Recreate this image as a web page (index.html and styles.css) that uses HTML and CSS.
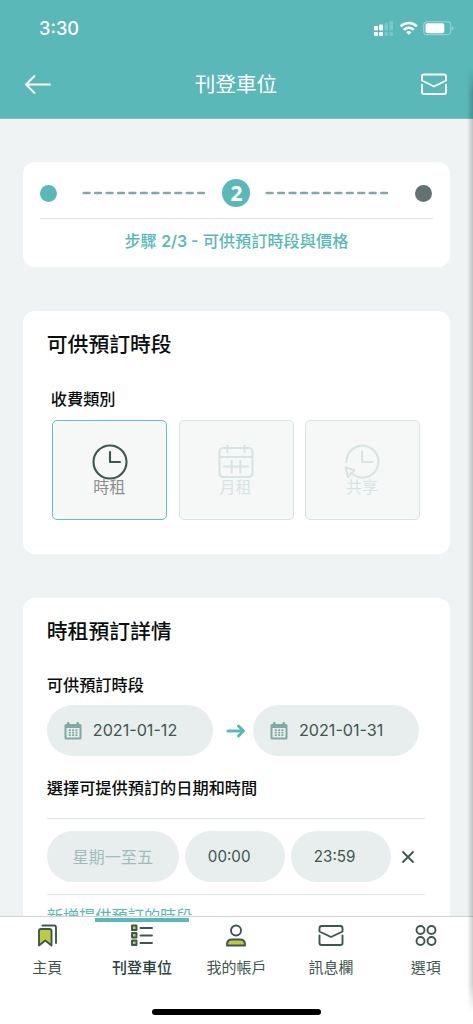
FILE: index.html
```html
<!DOCTYPE html>
<html lang="zh-Hant">
<head>
<meta charset="utf-8">
<meta name="viewport" content="width=device-width, initial-scale=1">
<title>刊登車位</title>
<link rel="stylesheet" href="styles.css">
</head>
<body>
<div class="screen">
  <header class="header">
    <div class="status">
      <span class="time">3:30</span>
      <svg class="status-icons" width="84" height="18" viewBox="0 0 84 18" fill="#fff">
        <rect x="1" y="6" width="4" height="4.500" rx="1"/><rect x="6" y="4.500" width="4" height="6" rx="1"/>
        <rect x="1" y="12" width="4" height="4" rx="1"/><rect x="6" y="12" width="4" height="4" rx="1"/>
        <g opacity=".2"><rect x="11.500" y="3" width="3.500" height="7.500" rx="1"/><rect x="16.500" y="1" width="3.500" height="9.500" rx="1"/><rect x="11.500" y="12" width="3.500" height="4" rx="1"/><rect x="16.500" y="12" width="3.500" height="4" rx="1"/></g>
        <g fill="none" stroke="#fff" stroke-width="2.500"><path d="M27.700 6.300a11.500 11.500 0 0 1 16.200 0"/><path d="M30.800 9.800a7.200 7.200 0 0 1 10 0"/></g>
        <path d="M33.200 12.300a3.800 3.800 0 0 1 5.200 0L35.800 15z"/>
        <rect x="50.700" y="1.700" width="27" height="13" rx="3.500" fill="none" stroke="#fff" stroke-opacity=".35" stroke-width="1.200"/>
        <rect x="52.500" y="3.200" width="18.800" height="10" rx="2"/>
        <path d="M79.300 6.200q2.600 2 0 4z" opacity=".5"/>
      </svg>
    </div>
    <div class="titlebar">
      <svg width="28" height="24" viewBox="0 0 28 24" fill="none" stroke="#fff" stroke-width="1.800" stroke-linecap="round" stroke-linejoin="round"><path d="M26 12.500H2M10.500 4L2 12.500l8.500 8.500"/></svg>
      <h1 class="page-title">刊登車位</h1>
      <svg width="28" height="24" viewBox="0 0 28 24" fill="none" stroke="#fff" stroke-width="1.900" stroke-linecap="round" stroke-linejoin="round"><path d="M2 12.800V20q0 2 2 2h20q2 0 2-2v-7.200M2 8.500v-4q0-2 2-2h20q2 0 2 2v4l-12 6z"/></svg>
    </div>
  </header>

  <main class="content">
    <section class="card steps">
      <div class="track">
        <span class="dot"></span>
        <svg width="124" height="4" viewBox="0 0 124 4"><path class="dash" d="M1.800 2H123"/></svg>
        <span class="current">2</span>
        <svg width="124" height="4" viewBox="0 0 124 4"><path class="dash" d="M1.800 2H123"/></svg>
        <span class="dot dot-next"></span>
      </div>
      <p class="step-text">步驟 <b>2/3 -</b> 可供預訂時段與價格</p>
    </section>

    <section class="card types">
      <h2 class="card-title">可供預訂時段</h2>
      <h3 class="label type-label">收費類別</h3>
      <div class="options">
        <div class="option selected">
          <svg width="36" height="36" viewBox="0 0 36 36" class="option-icon"><circle cx="18" cy="18" r="16.500"/><path d="M18 8v10h10"/></svg>
          <span>時租</span>
        </div>
        <div class="option">
          <svg width="36" height="36" viewBox="0 0 36 36" class="option-icon"><rect x="1.500" y="4" width="33" height="29" rx="3.500"/><path d="M1.500 13h33M9.500 1.500v6.500M26.500 1.500v6.500M6 22.500h24M13.700 17v11.500M22.300 17v11.500"/></svg>
          <span>月租</span>
        </div>
        <div class="option">
          <svg width="36" height="36" viewBox="0 0 36 36" class="option-icon"><path d="M2.500 18A16 16 0 1 1 9 30.500M18 7.500v10.500h10.500M1.500 23.500l9 2.500-6.500 7z"/></svg>
          <span>共享</span>
        </div>
      </div>
    </section>

    <section class="card details">
      <h2 class="card-title">時租預訂詳情</h2>
      <h3 class="label">可供預訂時段</h3>
      <div class="dates">
        <div class="pill date">
          <svg width="18" height="18" viewBox="0 0 18 18"><path fill="#82a7a5" fill-rule="evenodd" d="M2 2h1V1q0-1 1.300-1t1.300 1v1h6.800V1q0-1 1.300-1T15 1v1h1q1.500 0 1.500 1.500v12.500q0 1.500-1.500 1.500H2q-1.500 0-1.500-1.500V3.500Q.5 2 2 2zM2.500 6v9.500h13V6z"/><path stroke="#82a7a5" stroke-width="1.800" stroke-dasharray="2 1.300" d="M4.800 8.200h8.600M4.800 10.700h8.600M4.800 13.200h8.600"/></svg>
          <span>2021-01-12</span>
        </div>
        <svg class="arrow" width="20" height="16" viewBox="0 0 20 16" fill="none" stroke="#5ab9b8" stroke-width="3" stroke-linecap="round" stroke-linejoin="round"><path d="M2 8h15M12.500 3l5 5-5 5"/></svg>
        <div class="pill date">
          <svg width="18" height="18" viewBox="0 0 18 18"><path fill="#82a7a5" fill-rule="evenodd" d="M2 2h1V1q0-1 1.300-1t1.300 1v1h6.800V1q0-1 1.300-1T15 1v1h1q1.500 0 1.500 1.500v12.500q0 1.500-1.500 1.500H2q-1.500 0-1.500-1.500V3.500Q.5 2 2 2zM2.500 6v9.500h13V6z"/><path stroke="#82a7a5" stroke-width="1.800" stroke-dasharray="2 1.300" d="M4.800 8.200h8.600M4.800 10.700h8.600M4.800 13.200h8.600"/></svg>
          <span>2021-01-31</span>
        </div>
      </div>
      <h3 class="label slots-label">選擇可提供預訂的日期和時間</h3>
      <div class="slot">
        <div class="pill days">星期一至五</div>
        <div class="pill hour">00:00</div>
        <div class="pill hour">23:59</div>
        <svg class="remove" width="14" height="14" viewBox="0 0 14 14" fill="none" stroke="#405550" stroke-width="1.800" stroke-linecap="round"><path d="M2 2l10 10M12 2L2 12"/></svg>
      </div>
      <a class="add">新增提供預訂的時段</a>
    </section>
  </main>

  <nav class="nav">
    <a class="tab">
      <svg width="28" height="26" viewBox="0 0 28 26" class="tab-icon"><path d="M9.500 2.500H21q2 0 2 2v15.500"/><path class="lime" d="M6 22.500V8q0-2 2-2h8.500q2 0 2 2v14.500l-6.250-5z"/></svg>
      <span>主頁</span>
    </a>
    <a class="tab active">
      <svg width="28" height="26" viewBox="0 0 28 26" class="tab-icon"><g class="lime"><rect x="4" y="2.500" width="4.500" height="4.500"/><rect x="4" y="10" width="4.500" height="4.500"/><rect x="4" y="17.500" width="4.500" height="4.500"/></g><path d="M12.500 5H24M12.500 12.500H24M12.500 20H24"/></svg>
      <span>刊登車位</span>
    </a>
    <a class="tab">
      <svg width="28" height="26" viewBox="0 0 28 26" class="tab-icon"><circle cx="14" cy="7.500" r="5"/><path class="lime" d="M5 22.500v-1q0-5 5-5h8q5 0 5 5v1z"/></svg>
      <span>我的帳戶</span>
    </a>
    <a class="tab">
      <svg width="28" height="26" viewBox="0 0 28 26" class="tab-icon"><path d="M2.500 12.500v7.500q0 2 2 2h19q2 0 2-2v-7.500M2.500 8.500v-3q0-2.500 2-2.500h19q2 0 2 2.500v3L14 14z"/></svg>
      <span>訊息欄</span>
    </a>
    <a class="tab">
      <svg width="28" height="26" viewBox="0 0 28 26" class="tab-icon"><circle cx="8.500" cy="7" r="4"/><circle cx="19.500" cy="7" r="4"/><circle cx="8.500" cy="18" r="4"/><circle cx="19.500" cy="18" r="4"/></svg>
      <span>選項</span>
    </a>
    <span class="indicator"></span>
    <span class="home"></span>
  </nav>
  <span class="edge"></span>
</div>
</body>
</html>
```

FILE: styles.css
```css
* { box-sizing: border-box; margin: 0; padding: 0; }

body {
  width: 473px;
  height: 1024px;
  overflow: hidden;
  font-family: Inter, "Noto Sans CJK TC", sans-serif;
  color: #0b0e0e;
}

svg { display: block; flex: none; }

.screen {
  position: relative;
  display: flex;
  flex-direction: column;
  height: 1024px;
  background: #f0f3f4;
}

.header {
  height: 118.500px;
  flex: none;
  background: #5ab8b8;
  border-bottom: 1px solid #85b8b7;
  color: #fff;
}

.status {
  display: flex;
  justify-content: space-between;
  align-items: center;
  height: 56px;
  padding: 0 16px 0 39px;
}

.status-icons { margin-top: 2px; }

.time { font-size: 18.200px; font-weight: 500; line-height: 20px; }

.titlebar {
  display: flex;
  justify-content: space-between;
  align-items: center;
  height: 56px;
  padding: 0 25px 0 24px;
}

.page-title {
  font-size: 20.600px;
  font-weight: 400;
  line-height: 28px;
  padding-top: 2px;
}

.content {
  flex: 1;
  min-height: 0;
  overflow: hidden;
  display: flex;
  flex-direction: column;
  gap: 44px;
  padding: 43.500px 23.500px 0 23.300px;
}

.card {
  flex: none;
  background: #fff;
  border-radius: 12px;
}

.steps { height: 105px; padding: 0 17px; }

.track {
  display: flex;
  align-items: center;
  justify-content: space-between;
  height: 57px;
  padding-top: 6px;
  border-bottom: 1.500px solid #dce5e5;
}

.dot { width: 17px; height: 17px; margin-right: 9px; border-radius: 50%; background: #5ab9b8; }
.dot-next { margin: 0 0 0 11px; background: #627372; }

.dash {
  stroke: #82a7a5;
  stroke-width: 2.600;
  stroke-linecap: round;
  stroke-dasharray: 5.700 5.750;
}

.current {
  display: grid;
  place-items: center;
  width: 28px;
  height: 28px;
  margin: 0 -1px 0 1px;
  border-radius: 50%;
  background: #5ab9b8;
  color: #fff;
  font-family: "Open Sans", sans-serif;
  font-size: 21px;
  font-weight: 700;
  line-height: 28px;
}

.step-text {
  margin-top: 10px;
  text-align: center;
  color: #5ab9b8;
  font-size: 16.200px;
  font-weight: 500;
  line-height: 24px;
}

.step-text b { font-size: 15.800px; font-weight: 600; }

.types { height: 243px; padding: 20px 23.500px 0; }

.card-title { font-size: 20.800px; font-weight: 500; line-height: 28px; }

.label { font-size: 16.200px; font-weight: 500; line-height: 24px; }

.type-label { margin: 28px 0 9px 4px; }

.options { display: flex; gap: 11.300px; padding-left: 5.500px; }

.option {
  display: flex;
  flex-direction: column;
  align-items: center;
  flex: none;
  width: 115px;
  height: 100px;
  padding-top: 23px;
  border: 1.500px solid #d7e4e3;
  border-radius: 5px;
  background: #f6f8f8;
  color: #d7e4e3;
  font-size: 16px;
  line-height: 15px;
}

.option span { margin-right: 1px; }

.option-icon {
  fill: none;
  stroke: #d7e4e3;
  stroke-width: 2.100;
  stroke-linecap: round;
  stroke-linejoin: round;
}

.selected { border-color: #65c1c1; color: #8c8f8f; }
.selected .option-icon { stroke: #405550; }

.details { height: 400px; padding: 20px 23.500px 0; }
.details > .card-title { margin-bottom: 27px; }

.dates { display: flex; align-items: center; justify-content: space-between; margin-top: 8px; padding-right: 7px; }

.arrow { margin-left: 6px; }

.pill {
  display: flex;
  align-items: center;
  height: 51px;
  padding-bottom: 2px;
  border-radius: 26px;
  background: #e8eeee;
  color: #405550;
  font-size: 16.150px;
}

.date { width: 166px; padding-left: 17px; gap: 11px; }
.date svg { margin-top: 2px; }

.slots-label { margin-top: 20px; }

.slot {
  display: flex;
  align-items: center;
  gap: 6px;
  width: 378px;
  height: 77px;
  margin-top: 18px;
  border-top: 1.500px solid #dce5e5;
  border-bottom: 1.500px solid #dce5e5;
}

.days { width: 132px; justify-content: center; color: #a1bdbb; }
.hour { width: 100px; padding: 0 0 0 23px; font-size: 15.200px; }
.remove { margin-left: 4px; }

.add { display: block; margin-top: 9px; color: #5ab9b8; font-size: 16.200px; line-height: 24px; }

.nav {
  position: relative;
  flex: none;
  display: grid;
  grid-template-columns: repeat(5, 1fr);
  height: 108px;
  background: #fff;
  border-top: 1px solid #cfd3d3;
}

.tab {
  display: flex;
  flex-direction: column;
  align-items: center;
  padding-top: 6px;
  gap: 8px;
  color: #405550;
  font-size: 15px;
  line-height: 22px;
}

.active { color: #2b403e; font-weight: 500; }

.tab-icon {
  fill: none;
  stroke: #405550;
  stroke-width: 1.900;
  stroke-linecap: round;
  stroke-linejoin: round;
}

.lime { fill: #bccb45; }

.indicator {
  position: absolute;
  left: 95px;
  top: 1px;
  width: 94px;
  height: 3.500px;
  background: #5ab9b8;
}

.home {
  position: absolute;
  left: 152px;
  bottom: 9px;
  width: 169px;
  height: 6px;
  border-radius: 3px;
  background: #000;
}

.edge {
  position: absolute;
  right: 0;
  top: 68px;
  width: 6px;
  height: 944px;
  background: linear-gradient(90deg, transparent, rgba(0, 0, 0, .2));
  mask-image: linear-gradient(transparent, #000 24px, #000 915px, transparent);
}
```
